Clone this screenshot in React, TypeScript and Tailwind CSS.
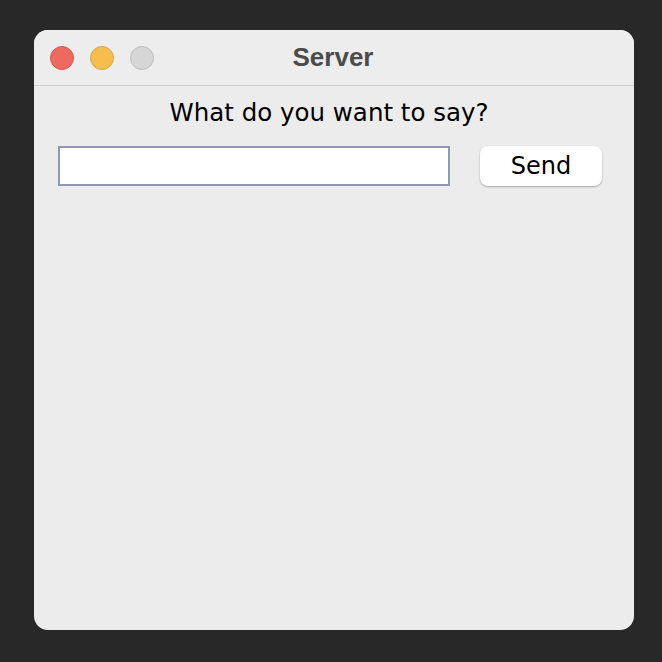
export default function App() {
  return (
    <div className="w-[662px] h-[662px] bg-[#282828] flex items-start justify-start pl-[34px] pt-[30px]" style={{ fontFamily: '"DejaVu Sans", sans-serif' }}>
      <div className="w-[600px] h-[600px] rounded-[14px] bg-[#ececec] overflow-hidden flex flex-col">
        {/* title bar */}
        <div className="relative h-[56px] shrink-0 border-b border-[#d0d0d0] bg-[#ededed] flex items-center justify-center">
          <div className="absolute left-[16px] top-[16px] flex gap-[16px]">
            <div className="w-[24px] h-[24px] rounded-full bg-[#ee6a5f] border border-[#d9584e]" />
            <div className="w-[24px] h-[24px] rounded-full bg-[#f5be4f] border border-[#dea63c]" />
            <div className="w-[24px] h-[24px] rounded-full bg-[#d6d6d6] border border-[#bcbcbc]" />
          </div>
          <span className="text-[26px] font-bold text-[#4b4b4b] ml-[-2px]" style={{ fontFamily: '"Liberation Sans", Arial, sans-serif' }}>Server</span>
        </div>

        <div className="flex flex-col items-center pt-[8px]">
          <div className="text-[24.5px] text-black leading-[38px] ml-[-10px]">What do you want to say?</div>
          <div className="w-full flex items-center pl-[24px] pr-[32px] pt-[14px]">
            <input className="w-[392px] h-[40px] bg-white border-2 border-[#8b9bb2] outline-none" />
            <button className="ml-auto w-[122px] h-[40px] rounded-[8px] bg-white shadow-[0_1px_2px_rgba(0,0,0,0.3)] text-[24px] text-black">
              Send
            </button>
          </div>
        </div>
      </div>
    </div>
  );
}
